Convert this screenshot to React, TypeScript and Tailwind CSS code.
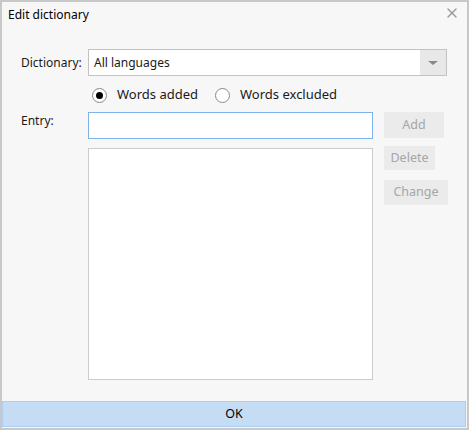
import { X } from 'lucide-react';

const font = { fontFamily: '"Noto Sans", "Open Sans", sans-serif' };

function Radio({ checked, label }: { checked?: boolean; label: string }) {
  return (
    <div className="flex items-center">
      <div className="w-[15px] h-[15px] rounded-full border border-[#8a8a8a] bg-white flex items-center justify-center">
        {checked && <div className="w-[7px] h-[7px] rounded-full bg-black" />}
      </div>
      <span className="ml-[10px] text-[13px] text-[#1a1a1a]">{label}</span>
    </div>
  );
}

function GrayButton({ label, w, h }: { label: string; w: string; h: string }) {
  return (
    <button className={`${w} ${h} bg-[#ebebeb] text-[12.5px] text-[#a6a6a6] flex items-center justify-center`}>
      {label}
    </button>
  );
}

export default function App() {
  return (
    <div className="w-[470px] h-[431px] bg-white" style={font}>
      <div className="w-[469px] h-[430px] border-2 border-[#c8c8c8] bg-[#f7f7f7] flex flex-col">
        {/* Title bar */}
        <div className="h-[26px] flex items-center justify-between pl-[6px] pr-[7px]">
          <span className="text-[12px] text-black">Edit dictionary</span>
          <X className="w-[16px] h-[16px] text-[#9a9a9a] -mt-[4px]" strokeWidth={2.2} />
        </div>

        {/* Body */}
        <div className="flex-1 pl-[19px] pt-[21px]">
          <div className="flex items-center h-[27px]">
            <span className="w-[67px] text-[12px] text-[#1a1a1a]">Dictionary:</span>
            <div className="w-[359px] h-[27px] border border-[#c2c2c2] bg-white flex items-center">
              <span className="flex-1 pl-[5px] text-[12px] text-[#1a1a1a]">All languages</span>
              <div className="w-[26px] h-full bg-[#e8e8e8] flex items-center justify-center">
                <div className="w-0 h-0 border-l-[5px] border-r-[5px] border-t-[4px] border-l-transparent border-r-transparent border-t-[#8a8a8a]" />
              </div>
            </div>
          </div>

          <div className="flex items-center h-[20px] mt-[9px] pl-[71px] gap-[17px]">
            <Radio checked label="Words added" />
            <Radio label="Words excluded" />
          </div>

          <div className="flex items-start mt-[7px]">
            <span className="w-[67px] text-[12px] text-[#1a1a1a]">Entry:</span>
            <div className="w-[285px] h-[27px] border border-[#7eb4ea] bg-white" />
            <div className="ml-[11px]">
              <GrayButton label="Add" w="w-[60px]" h="h-[26px]" />
            </div>
          </div>

          <div className="flex items-start mt-[7px] pl-[67px]">
            <div className="w-[285px] h-[232px] mt-[2px] border border-[#cccccc] bg-white" />
            <div className="ml-[11px] flex flex-col gap-[10px]">
              <GrayButton label="Delete" w="w-[51px]" h="h-[24px]" />
              <GrayButton label="Change" w="w-[64px]" h="h-[25px]" />
            </div>
          </div>
        </div>

        {/* Footer */}
        <button className="w-[464px] h-[26px] mb-[1px] border border-[#aacdf0] bg-[#c4ddf5] text-[12.5px] text-black flex items-center justify-center">
          OK
        </button>
      </div>
    </div>
  );
}
